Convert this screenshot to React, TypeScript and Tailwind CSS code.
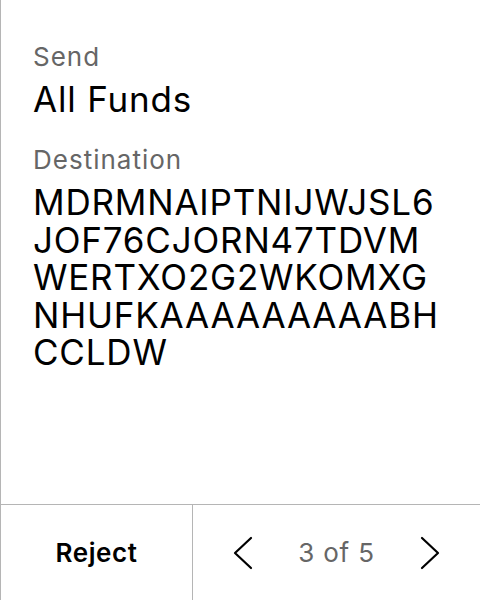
import React from "react";

const lines = ["MDRMNAIPTNIJWJSL6", "JOF76CJORN47TDVM", "WERTXO2G2WKOMXG", "NHUFKAAAAAAAAABH", "CCLDW"];

export default function App() {
  return (
    <div
      className="w-[480px] h-[600px] bg-white flex flex-col border-l border-[#b5b5b5] text-black"
      style={{ fontFamily: "Inter, 'Noto Sans', sans-serif" }}
    >
      <div className="flex-1 pl-[32px] pt-[40px] flex flex-col">
        <div className="text-[26px] leading-[34px] tracking-[1px] text-[#666666]">Send</div>
        <div className="text-[35px] leading-[40px] tracking-[0.8px] mt-[5px]">All Funds</div>
        <div className="text-[26px] leading-[34px] tracking-[1px] text-[#666666] mt-[24px]">Destination</div>
        <p className="text-[35px] leading-[37.5px] tracking-[0.8px] mt-[7px]">
          {lines.map((l, i) => (
            <React.Fragment key={l}>
              {l}
              {i < lines.length - 1 && <br />}
            </React.Fragment>
          ))}
        </p>
      </div>
      <div className="h-[96px] border-t border-[#b5b5b5] flex">
        <div className="w-[192px] border-r border-[#b5b5b5] flex items-center justify-center text-[26px] font-semibold tracking-[0.6px]">
          Reject
        </div>
        <div className="flex-1 flex items-center justify-between px-[38px]">
          <svg width="24" height="34" viewBox="0 0 24 34" fill="none">
            <path d="M20 2 L4 17 L20 32" stroke="black" strokeWidth="2.2" strokeLinecap="round" strokeLinejoin="round" />
          </svg>
          <span className="text-[26px] tracking-[0.8px] text-[#666666]">3 of 5</span>
          <svg width="24" height="34" viewBox="0 0 24 34" fill="none">
            <path d="M4 2 L20 17 L4 32" stroke="black" strokeWidth="2.2" strokeLinecap="round" strokeLinejoin="round" />
          </svg>
        </div>
      </div>
    </div>
  );
}
